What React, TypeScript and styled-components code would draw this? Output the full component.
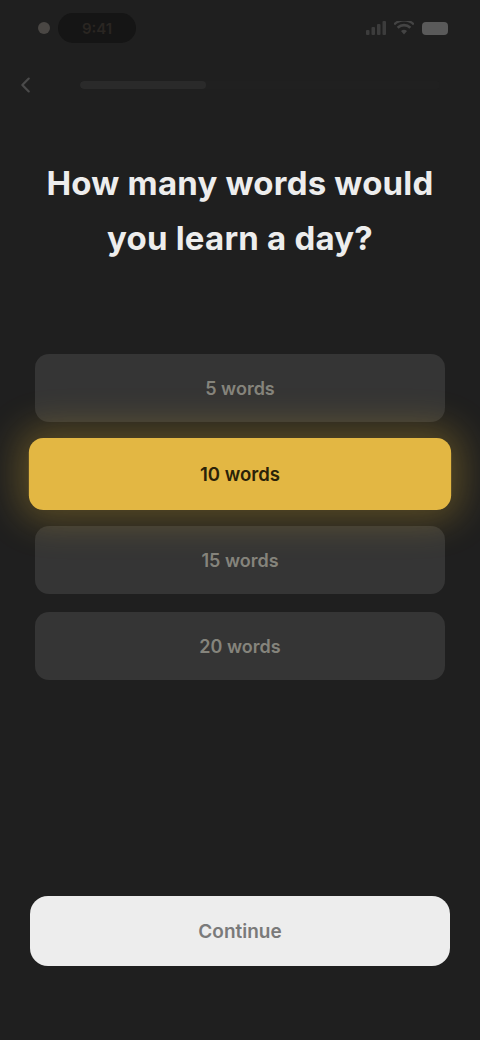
import React, { FC, useState } from "react";
import styled, { createGlobalStyle } from "styled-components";

const GlobalStyle = createGlobalStyle`
  html, body {
    margin: 0;
    padding: 0;
    background: #1f1f1f;
  }
  body {
    font-family: "Inter", "Noto Sans", "Liberation Sans", sans-serif;
  }
`;

const OPTIONS = ["5 words", "10 words", "15 words", "20 words"];

export default function App() {
  const [selected, setSelected] = useState(1);

  return (
    <>
      <GlobalStyle />
      <Page>
        <StatusBar>
          <StatusLeft>
            <RecDot />
            <TimePill>9:41</TimePill>
          </StatusLeft>
          <StatusRight>
            <SignalIcon />
            <WifiIcon />
            <Battery />
          </StatusRight>
        </StatusBar>

        <Header>
          <BackButton aria-label="Back">
            <svg width="22" height="22" viewBox="0 0 24 24" fill="none">
              <path
                d="M15 5l-7 7 7 7"
                stroke="#4a4a4a"
                strokeWidth="2.4"
                strokeLinecap="round"
                strokeLinejoin="round"
              />
            </svg>
          </BackButton>
          <Progress>
            <ProgressFill style={{ width: "35%" }} />
          </Progress>
        </Header>

        <Title>
          How many words would
          <br />
          you learn a day?
        </Title>

        <OptionList>
          {OPTIONS.map((label, i) => (
            <OptionItem
              key={label}
              label={label}
              isSelected={i === selected}
              onClick={() => setSelected(i)}
            />
          ))}
        </OptionList>

        <Spacer />

        <ContinueButton>Continue</ContinueButton>
      </Page>
    </>
  );
}

interface OptionItemProps {
  label: string;
  isSelected: boolean;
  onClick: () => void;
}

const OptionItem: FC<OptionItemProps> = ({ label, isSelected, onClick }) => (
  <Option $isSelected={isSelected} onClick={onClick}>
    {label}
  </Option>
);

const SignalIcon = () => (
  <svg width="20" height="14" viewBox="0 0 20 14">
    <rect x="0" y="9" width="3.5" height="5" rx="1" fill="#3c3c3c" />
    <rect x="5.5" y="6" width="3.5" height="8" rx="1" fill="#3c3c3c" />
    <rect x="11" y="3" width="3.5" height="11" rx="1" fill="#3c3c3c" />
    <rect x="16.5" y="0" width="3.5" height="14" rx="1" fill="#3c3c3c" />
  </svg>
);

const WifiIcon = () => (
  <svg width="20" height="14" viewBox="0 0 20 14">
    <path
      d="M10 13.5l3-3.4a4.3 4.3 0 0 0-6 0zM4.6 7.8a7.7 7.7 0 0 1 10.8 0l1.9-2a10.5 10.5 0 0 0-14.6 0zM1 4.3a12.8 12.8 0 0 1 18 0L20.6 2.5a15.2 15.2 0 0 0-21.2 0z"
      fill="#444"
    />
  </svg>
);

const Page = styled.div`
  min-height: 1040px;
  display: flex;
  flex-direction: column;
  background: #1f1f1f;
  box-sizing: border-box;
  padding-bottom: 74px;
`;

const StatusBar = styled.div`
  height: 56px;
  display: flex;
  align-items: center;
  justify-content: space-between;
  padding: 0 32px 0 38px;
`;

const StatusLeft = styled.div`
  display: flex;
  align-items: center;
  gap: 8px;
`;

const RecDot = styled.span`
  width: 12px;
  height: 12px;
  border-radius: 50%;
  background: #4a4744;
`;

const TimePill = styled.span`
  display: inline-flex;
  align-items: center;
  justify-content: center;
  width: 78px;
  height: 30px;
  border-radius: 15px;
  background: #151515;
  color: #2a2622;
  font-size: 15px;
  font-weight: 600;
`;

const StatusRight = styled.div`
  display: flex;
  align-items: center;
  gap: 8px;
`;

const Battery = styled.span`
  width: 26px;
  height: 13px;
  border-radius: 4px;
  background: #5a5a5a;
`;

const Header = styled.div`
  height: 58px;
  display: flex;
  align-items: center;
  gap: 40px;
  padding: 0 40px 0 12px;
`;

const BackButton = styled.button`
  width: 28px;
  height: 28px;
  padding: 0;
  border: none;
  background: transparent;
  display: flex;
  align-items: center;
  justify-content: center;
`;

const Progress = styled.div`
  flex: 1;
  height: 8px;
  border-radius: 4px;
  background: #202020;
  overflow: hidden;
`;

const ProgressFill = styled.div`
  height: 100%;
  border-radius: 4px;
  background: #2a2a2a;
`;

const Title = styled.h1`
  margin: 42px 0 0;
  padding: 0 36px;
  text-align: center;
  color: #ededed;
  font-size: 33px;
  line-height: 55px;
  font-weight: 700;
  letter-spacing: 0.2px;
`;

const OptionList = styled.div`
  margin-top: 88px;
  padding: 0 35px;
  display: flex;
  flex-direction: column;
  gap: 18px;
`;

const Option = styled.button<{ $isSelected: boolean }>`
  position: relative;
  z-index: ${(p) => (p.$isSelected ? 2 : 1)};
  height: 68px;
  border-radius: 14px;
  border: none;
  font-family: inherit;
  font-size: 18px;
  font-weight: 600;
  cursor: pointer;
  color: ${(p) => (p.$isSelected ? "#2a2208" : "#85847c")};
  background: ${(p) => (p.$isSelected ? "#e3b743" : "#353535")};
  box-shadow: ${(p) =>
    p.$isSelected ? "0 0 36px 10px rgba(226, 178, 50, 0.3)" : "none"};
  transform: ${(p) => (p.$isSelected ? "scaleX(1.03) scaleY(1.06)" : "none")};
`;

const Spacer = styled.div`
  flex: 1;
`;

const ContinueButton = styled.button`
  margin: 0 30px;
  height: 70px;
  border: none;
  border-radius: 18px;
  background: #ededed;
  color: #7a7a7a;
  font-family: inherit;
  font-size: 19px;
  font-weight: 600;
  cursor: pointer;
`;
